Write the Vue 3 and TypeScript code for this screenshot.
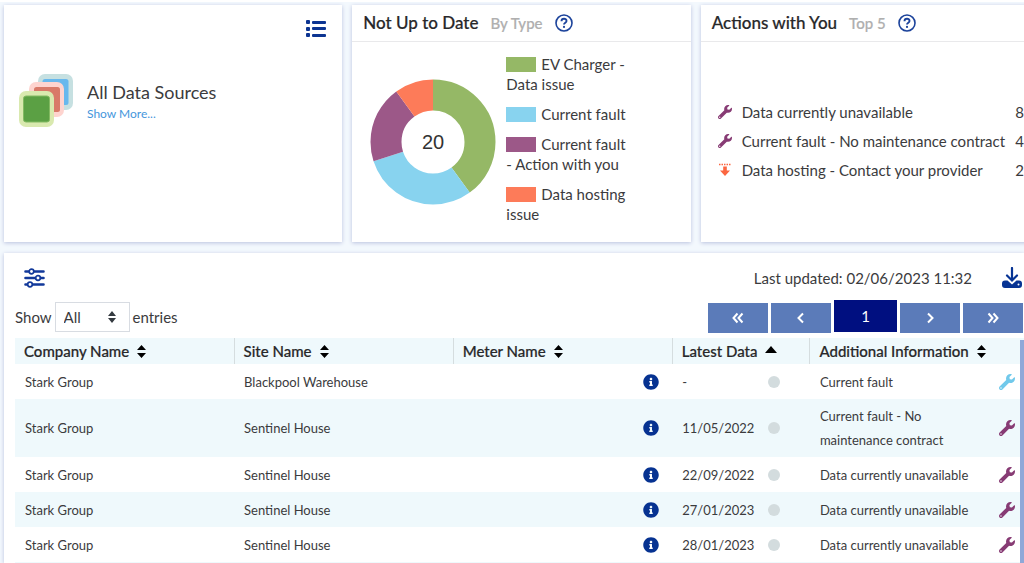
<script setup lang="ts">
import { computed, ref } from 'vue'

interface Segment { label: string; value: number; color: string }
interface Action { icon: 'wrench' | 'hosting'; label: string; count: number }
interface Row { company: string; site: string; meter: string; date: string; info: string; tone: 'blue' | 'purple' }
type SortKey = 'company' | 'site' | 'meter' | 'date' | 'info'

const wrenchPath =
  'M507.73 109.1c-2.24-9.03-13.54-12.09-20.12-5.51l-74.36 74.36-67.88-11.31-11.31-67.88 74.36-74.36c6.62-6.62 3.43-17.9-5.66-20.16-47.38-11.74-99.55.91-136.58 37.93-39.64 39.64-50.55 97.1-34.05 147.2L18.74 402.76c-24.99 24.99-24.99 65.51 0 90.5 24.99 24.99 65.51 24.99 90.5 0l213.21-213.21c50.12 16.71 107.47 5.68 147.37-34.22 37.07-37.07 49.7-89.32 37.91-136.73zM64 472c-13.25 0-24-10.75-24-24 0-13.26 10.75-24 24-24s24 10.74 24 24c0 13.25-10.75 24-24 24z'
const infoPath =
  'M256 8C119.043 8 8 119.083 8 256c0 136.997 111.043 248 248 248s248-111.003 248-248C504 119.083 392.957 8 256 8zm0 110c23.196 0 42 18.804 42 42s-18.804 42-42 42-42-18.804-42-42 18.804-42 42-42zm56 254c0 6.627-5.373 12-12 12h-88c-6.627 0-12-5.373-12-12v-24c0-6.627 5.373-12 12-12h12v-64h-12c-6.627 0-12-5.373-12-12v-24c0-6.627 5.373-12 12-12h64c6.627 0 12 5.373 12 12v100h12c6.627 0 12 5.373 12 12v24z'

const segments: Segment[] = [
  { label: 'EV Charger -\nData issue', value: 8, color: '#95b866' },
  { label: 'Current fault', value: 6, color: '#88d3ef' },
  { label: 'Current fault\n- Action with you', value: 4, color: '#9c5888' },
  { label: 'Data hosting\nissue', value: 2, color: '#fd7b59' },
]
const total = segments.reduce((sum, s) => sum + s.value, 0)
const arcs = computed(() => {
  let start = 0
  return segments.map((s) => {
    const arc = { color: s.color, size: (s.value / total) * 100, start }
    start += arc.size
    return arc
  })
})

const actions: Action[] = [
  { icon: 'wrench', label: 'Data currently unavailable', count: 8 },
  { icon: 'wrench', label: 'Current fault - No maintenance contract', count: 4 },
  { icon: 'hosting', label: 'Data hosting - Contact your provider', count: 2 },
]

const columns: { key: SortKey; label: string }[] = [
  { key: 'company', label: 'Company Name' },
  { key: 'site', label: 'Site Name' },
  { key: 'meter', label: 'Meter Name' },
  { key: 'date', label: 'Latest Data' },
  { key: 'info', label: 'Additional Information' },
]
const rows: Row[] = [
  { company: 'Stark Group', site: 'Blackpool Warehouse', meter: '', date: '-', info: 'Current fault', tone: 'blue' },
  { company: 'Stark Group', site: 'Sentinel House', meter: '', date: '11/05/2022', info: 'Current fault - No maintenance contract', tone: 'purple' },
  { company: 'Stark Group', site: 'Sentinel House', meter: '', date: '22/09/2022', info: 'Data currently unavailable', tone: 'purple' },
  { company: 'Stark Group', site: 'Sentinel House', meter: '', date: '27/01/2023', info: 'Data currently unavailable', tone: 'purple' },
  { company: 'Stark Group', site: 'Sentinel House', meter: '', date: '28/01/2023', info: 'Data currently unavailable', tone: 'purple' },
]
const sortedBy = ref<SortKey>('date')
const pageSize = ref('All')
</script>

<template>
  <main class="page">
    <section class="cards">
      <article class="card sources">
        <button class="icon-button list-button" aria-label="List view">
          <svg width="20" height="18" viewBox="0 0 20 18" fill="#0d3592">
            <rect x="0" y="0" width="4" height="4" rx="1" /><rect x="6" y="1" width="14" height="3" rx="1" />
            <rect x="0" y="7" width="4" height="4" rx="1" /><rect x="6" y="7" width="14" height="3" rx="1" />
            <rect x="0" y="13" width="4" height="4" rx="1" /><rect x="6" y="14" width="14" height="3" rx="1" />
          </svg>
        </button>
        <div class="source">
          <svg width="54" height="53" viewBox="0 0 54 53" aria-hidden="true">
            <rect x="19" y="0" width="35" height="36" rx="7" fill="#c6e0e1" />
            <rect x="23.500" y="5" width="26" height="26" rx="2.500" fill="#68b8ed" />
            <rect x="10" y="8" width="35" height="35" rx="7" fill="#fed4cf" />
            <rect x="15" y="13" width="26" height="25" rx="2.500" fill="#d97a69" />
            <rect x="0" y="17" width="35" height="36" rx="7" fill="#d9e9af" />
            <rect x="4.500" y="22" width="26" height="26" rx="2.500" fill="#5ba044" stroke="#83ba62" />
          </svg>
          <div class="source-text">
            <h2>All Data Sources</h2>
            <a href="#sources">Show More...</a>
          </div>
        </div>
      </article>

      <article class="card">
        <header class="card-head">
          <h2>Not Up to Date</h2><span class="sub">By Type</span>
          <button class="icon-button" aria-label="Help: not up to date">
            <svg width="18" height="18" viewBox="0 0 18 18" fill="none" stroke="#1c439b">
              <circle cx="9" cy="9" r="8" stroke-width="1.600" />
              <path d="M6.500 7.200C6.500 3.900 11.600 4.100 11.500 7C11.500 8.700 9 8.700 9 10.600" stroke-width="1.900" />
              <circle cx="9" cy="12.900" r="1.100" fill="#1c439b" stroke="none" />
            </svg>
          </button>
        </header>
        <div class="chart">
          <svg class="donut" width="126" height="126" viewBox="0 0 126 126" role="img" aria-label="20 not up to date">
            <g transform="rotate(-90 63 63)">
              <circle v-for="a in arcs" :key="a.color" cx="63" cy="63" r="47" fill="none" :stroke="a.color"
                stroke-width="31" pathLength="100" :stroke-dasharray="`${a.size} ${100 - a.size}`" :stroke-dashoffset="-a.start" />
            </g>
            <text x="63" y="70" text-anchor="middle">{{ total }}</text>
          </svg>
          <ul class="legend">
            <li v-for="s in segments" :key="s.label"><i class="swatch" :style="{ background: s.color }"></i>{{ s.label }}</li>
          </ul>
        </div>
      </article>

      <article class="card">
        <header class="card-head">
          <h2>Actions with You</h2><span class="sub">Top 5</span>
          <button class="icon-button" aria-label="Help: actions with you">
            <svg width="18" height="18" viewBox="0 0 18 18" fill="none" stroke="#1c439b">
              <circle cx="9" cy="9" r="8" stroke-width="1.600" />
              <path d="M6.500 7.200C6.500 3.900 11.600 4.100 11.500 7C11.500 8.700 9 8.700 9 10.600" stroke-width="1.900" />
              <circle cx="9" cy="12.900" r="1.100" fill="#1c439b" stroke="none" />
            </svg>
          </button>
        </header>
        <ul class="actions">
          <li v-for="a in actions" :key="a.label">
            <svg v-if="a.icon === 'wrench'" width="14" height="14" viewBox="0 0 512 512" fill="#873b74"><path :d="wrenchPath" /></svg>
            <svg v-else width="14" height="14" viewBox="0 0 14 14" fill="#fb6641">
              <path d="M1 1.500H13" stroke="#fb6641" stroke-width="1.500" stroke-dasharray="1.500 1" />
              <path d="M5.200 3.500H8.800V7.500H12L7 13L2 7.500H5.200Z" />
            </svg>
            <span class="action-label">{{ a.label }}</span>
            <span>{{ a.count }}</span>
          </li>
        </ul>
      </article>
    </section>

    <section class="panel">
      <div class="toolbar">
        <button class="icon-button" aria-label="Filters">
          <svg width="21" height="20" viewBox="0 0 21 20" fill="#fff" stroke="#12399a" stroke-linecap="round">
            <path d="M1.500 3.500H19.500M1.500 10H19.500M1.500 16.500H19.500" stroke-width="2.600" />
            <g stroke-width="1.700"><circle cx="7.500" cy="3.500" r="2.300" /><circle cx="14" cy="10" r="2.300" /><circle cx="6" cy="16.500" r="2.300" /></g>
          </svg>
        </button>
        <span class="updated">Last updated: 02/06/2023 11:32</span>
        <button class="icon-button" aria-label="Download">
          <svg width="20" height="21" viewBox="0 0 20 21" fill="none" stroke="#073494">
            <path d="M3 13.500H5.500L10 17.500L14.500 13.500H17Q20 13.500 20 16.500V18Q20 21 17 21H3Q0 21 0 18V16.500Q0 13.500 3 13.500Z" fill="#073494" stroke="none" />
            <path d="M5 9L10 14L15 9" stroke="#fff" stroke-width="4" />
            <path d="M10 1V13M5 8.500L10 13.500L15 8.500" stroke-width="2.200" stroke-linecap="round" />
            <circle cx="16.500" cy="17.500" r="1" fill="#fff" stroke="none" />
          </svg>
        </button>
      </div>

      <div class="controls">
        <div class="entries">
          <label for="page-size">Show</label>
          <span class="select-wrap">
            <select id="page-size" v-model="pageSize"><option>All</option><option>10</option><option>25</option></select>
            <svg class="select-arrow" width="8" height="12" viewBox="0 0 8 12" fill="#343a40"><path d="M4 0L8 5H0ZM0 7H8L4 12Z" /></svg>
          </span>
          <span>entries</span>
        </div>
        <nav class="pager" aria-label="Pages">
          <button aria-label="First page"><svg width="12" height="12" viewBox="0 0 12 12"><path d="M5.500 1.500L1.500 6L5.500 10.500M10.500 1.500L6.500 6L10.500 10.500" /></svg></button>
          <button aria-label="Previous page"><svg width="12" height="12" viewBox="0 0 12 12"><path d="M8 1.500L3.500 6L8 10.500" /></svg></button>
          <button class="current" aria-current="page">1</button>
          <button aria-label="Next page"><svg width="12" height="12" viewBox="0 0 12 12"><path d="M4 1.500L8.500 6L4 10.500" /></svg></button>
          <button aria-label="Last page"><svg width="12" height="12" viewBox="0 0 12 12"><path d="M1.500 1.500L5.500 6L1.500 10.500M6.500 1.500L10.500 6L6.500 10.500" /></svg></button>
        </nav>
      </div>

      <div class="table-area">
        <table>
          <thead>
            <tr>
              <th v-for="c in columns" :key="c.key" :class="`col-${c.key}`" scope="col">
                <button class="sort" @click="sortedBy = c.key">
                  {{ c.label }}
                  <svg v-if="sortedBy === c.key" width="12" height="13" viewBox="0 0 12 13"><path d="M6 1L12 8H0Z" /></svg>
                  <svg v-else width="9" height="13" viewBox="0 0 9 13"><path d="M4.500 0L9 5H0ZM0 8H9L4.500 13Z" /></svg>
                </button>
              </th>
            </tr>
          </thead>
          <tbody>
            <tr v-for="(r, i) in rows" :key="i">
              <td>{{ r.company }}</td>
              <td>{{ r.site }}</td>
              <td>
                <div class="cell end">{{ r.meter }}
                  <button class="icon-button" aria-label="Meter details"><svg width="16" height="16" viewBox="0 0 512 512" fill="#063291"><path :d="infoPath" /></svg></button>
                </div>
              </td>
              <td><div class="cell date"><span>{{ r.date }}</span><i class="dot"></i></div></td>
              <td>
                <div class="cell note"><span>{{ r.info }}</span>
                  <svg :class="['wrench', r.tone]" width="16" height="16" viewBox="0 0 512 512"><path :d="wrenchPath" /></svg>
                </div>
              </td>
            </tr>
          </tbody>
        </table>
        <div class="scroll-thumb"></div>
      </div>
    </section>
  </main>
</template>

<style>
body { margin: 0; }
</style>

<style scoped>
.page {
  box-sizing: border-box;
  height: 100vh;
  overflow: hidden;
  display: flex;
  flex-direction: column;
  gap: 11px;
  padding: 3px 0 0 4px;
  background: #f3f8fd;
  border-top: 2px solid #fff;
  color: #3b3b3d;
  font-family: Lato, "Liberation Sans", sans-serif;
  font-size: 15px;
  line-height: 20px;
}
.page * { box-sizing: border-box; }
button { font: inherit; color: inherit; }
h2 { margin: 0; font-weight: 500; }
ul { list-style: none; margin: 0; padding: 0; }
svg { display: block; flex: none; }
.icon-button { display: block; padding: 0; border: 0; background: none; flex: none; cursor: pointer; }

.cards { display: grid; grid-template-columns: repeat(3, 1fr); gap: 10px; margin-right: -15px; flex: none; }
.card { display: flex; flex-direction: column; min-width: 0; min-height: 237px; background: #fff; box-shadow: 0 1px 4px #b9c1de; }
.card-head { display: flex; align-items: center; gap: 12px; height: 37px; padding: 0 11px; border-bottom: 1px solid #e9e9eb; }
.card-head h2 { font-size: 17px; color: #28282a; -webkit-text-stroke: 0.2px; }
.sub { font-size: 15px; color: #afafaf; font-weight: 500; -webkit-text-stroke: 0.2px; }

.sources { padding: 15px 16px; }
.list-button { align-self: flex-end; }
.source { display: flex; align-items: center; gap: 14px; margin: 36px 0 0 -1px; }
.source h2 { font-size: 18px; line-height: 24px; font-weight: 400; }
.source-text { padding-top: 2px; }
.source-text a { display: block; color: #4596dc; font-size: 12px; text-decoration: none; }

.chart { flex: 1; display: flex; align-items: center; gap: 10px; padding: 0 18px; }
.donut text { font: 20px "Liberation Sans", sans-serif; fill: #333; }
.legend { display: flex; flex-direction: column; gap: 10px; padding-bottom: 6px; white-space: pre-line; }
.swatch { display: inline-block; width: 30px; height: 15px; margin-right: 5px; vertical-align: -2px; }

.actions { flex: 1; display: flex; flex-direction: column; justify-content: center; gap: 9px; padding: 0 15px 2px 17px; }
.actions li { display: flex; align-items: center; gap: 10px; white-space: nowrap; }
.action-label { flex: 1; }

.panel { flex: 1; min-height: 0; display: flex; flex-direction: column; background: #fff; box-shadow: 0 1px 4px #b9c1de; }
.toolbar { display: flex; align-items: center; padding: 14px 2px 0 20px; }
.updated { margin-left: auto; margin-right: 30px; }
.controls { display: flex; align-items: flex-start; justify-content: space-between; padding: 12px 1px 0 11px; }
.entries { display: flex; align-items: center; gap: 3px; padding-top: 2px; }
.select-wrap { position: relative; }
select { appearance: none; display: block; width: 75px; height: 30px; padding: 0 8px; border: 1px solid #d8dce2; border-radius: 0; background: #fff; color: inherit; font: inherit; }
.select-arrow { position: absolute; right: 14px; top: 9px; pointer-events: none; }
.pager { display: flex; align-items: flex-end; gap: 3px; }
.pager button { display: flex; align-items: center; justify-content: center; width: 60px; height: 30px; padding: 0; border: 0; background: #5b7bb9; color: #fff; }
.pager button.current { width: 63px; height: 32px; margin-bottom: 1px; background: #000f80; }
.pager path { fill: none; stroke: #fff; stroke-width: 2; }

.table-area { flex: 1; min-height: 0; display: flex; align-items: flex-start; margin: 5px 0 0 11px; background: #eff9fc; }
table { flex: 1; table-layout: fixed; width: 100%; border-collapse: collapse; }
th { height: 26px; padding: 0 9px; text-align: left; background: #eff9fc; color: #28282a; border-left: 1px solid #d5dddf; }
th:first-child { border-left: 0; }
.col-company, .col-site, .col-meter { width: 21.8%; }
.col-date { width: 13.7%; }
.sort { display: flex; align-items: center; gap: 8px; padding: 0; border: 0; background: none; font-weight: 500; white-space: nowrap; -webkit-text-stroke: 0.2px; }
td { height: 35px; padding: 5px 10px; font-size: 13px; line-height: 24px; }
tbody tr { background: #fff; }
tbody tr:nth-child(even) { background: #eff9fc; }
.cell { display: flex; align-items: center; }
.end { justify-content: flex-end; padding-right: 3px; }
.date { justify-content: space-between; padding-right: 20px; }
.dot { width: 12px; height: 12px; border-radius: 50%; background: #d3dcde; }
.note { justify-content: space-between; gap: 20px; margin-right: -5px; }
.wrench { fill: #873b74; }
.wrench.blue { fill: #71c9eb; }
.scroll-thumb { flex: none; align-self: stretch; width: 4px; margin-top: 2px; background: #8fa8d8; }
</style>
